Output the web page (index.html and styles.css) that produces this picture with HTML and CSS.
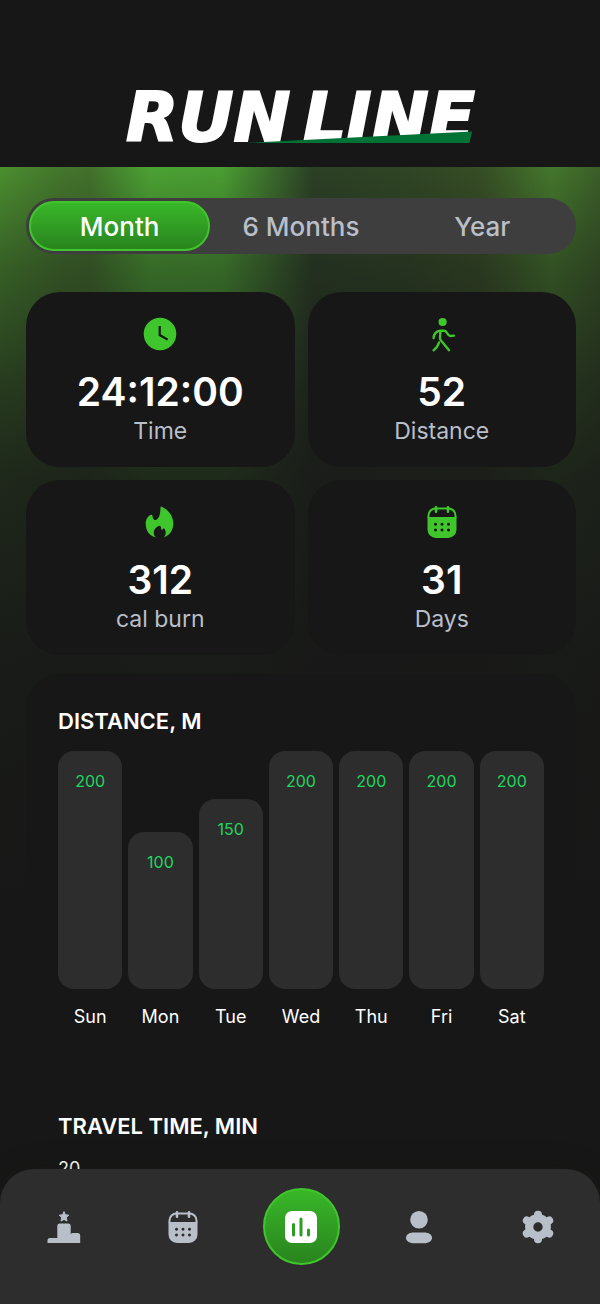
FILE: index.html
```html
<!DOCTYPE html>
<html lang="en">
<head>
    <meta charset="UTF-8">
    <meta name="viewport" content="width=device-width, initial-scale=1.0">
    <title>Run Line - Statistics</title>
    <link rel="stylesheet" href="styles.css">
</head>
<body>
    <svg class="sprite" aria-hidden="true">
        <symbol id="icon-calendar" viewBox="0 0 36 36">
            <path fill="none" stroke="currentColor" stroke-width="2" d="M4.500 14v-2.500a7 7 0 0 1 7-7h13a7 7 0 0 1 7 7V14"/>
            <path fill="none" stroke="currentColor" stroke-width="2.600" stroke-linecap="round" d="M12 3.200v4.600M24 3.200v4.600"/>
            <path fill="currentColor" fill-rule="evenodd" d="M3.500 13h29v12.500a8.500 8.500 0 0 1-8.500 8.500H12a8.500 8.500 0 0 1-8.500-8.500zM11.500 18.700a1.500 1.500 0 1 0 .01 0zm6.500 0a1.500 1.500 0 1 0 .01 0zm6.500 0a1.500 1.500 0 1 0 .01 0zM11.500 24.500a1.500 1.500 0 1 0 .01 0zm6.500 0a1.500 1.500 0 1 0 .01 0zm6.500 0a1.500 1.500 0 1 0 .01 0z"/>
        </symbol>
    </svg>

    <div class="screen">
        <header class="header">
            <svg class="logo" viewBox="0 0 360 60" role="img" aria-label="Run Line">
                <text x="6" y="55">RUN</text>
                <text x="183" y="55">LINE</text>
                <path class="logo-stripe" d="M124 57L352 45.500L349.500 57z"/>
            </svg>
        </header>

        <main class="content">
            <div class="tabs">
                <button class="tab active" type="button">Month</button>
                <button class="tab" type="button">6 Months</button>
                <button class="tab" type="button">Year</button>
            </div>

            <section class="stats">
                <div class="stat">
                    <svg class="stat-icon" viewBox="0 0 36 36">
                        <circle cx="18" cy="18" r="16.300" fill="currentColor"/>
                        <path fill="none" stroke="#171717" stroke-width="2.200" d="M17.700 10v9l8 4.600"/>
                    </svg>
                    <strong>24:12:00</strong>
                    <span>Time</span>
                </div>
                <div class="stat">
                    <svg class="stat-icon" viewBox="0 0 36 36">
                        <circle cx="18.600" cy="6" r="4.100" fill="currentColor"/>
                        <path fill="none" stroke="currentColor" stroke-width="2.400" stroke-linecap="round" stroke-linejoin="round" d="M9.600 22c0-4 3-7.300 6.500-7.300h4.200c3 0 3 5.300 6 5.300l3.600-.4M16.400 15l-.4 7.300c0 1 .6 1.700 1.200 2.500L25 34.200M15 26.500c-.9 3-2.300 5.600-5.400 7.700"/>
                    </svg>
                    <strong>52</strong>
                    <span>Distance</span>
                </div>
                <div class="stat">
                    <svg class="stat-icon" viewBox="0 0 36 36">
                        <path fill="currentColor" d="M18.500 3.400c0-.7.600-1 1.200-.7 6.800 3 11.600 9.600 11.600 16.600 0 7-3.700 12.300-9.500 14.100 1.200-1.200 1.900-2.800 1.900-4.900 0-1.800-.8-3.600-2.100-4.500-.3.900-.8 1.700-1.600 1.800-1-.1-.8-1.200-1-2.300-.1-1.200-.9-2.200-2.400-1.600-3 1.200-4.900 4-4.900 6.600 0 2 .8 3.700 2.200 4.900-6-.9-10.200-6.500-10.200-13.600 0-4.300 2.200-8.200 5.400-9.100.9-.2 1.300.3 1.400 1.200.3 2.400 1 4.100 2.800 4.100 3.200 0 5.200-5.200 5.200-12.600z"/>
                    </svg>
                    <strong>312</strong>
                    <span>cal burn</span>
                </div>
                <div class="stat">
                    <svg class="stat-icon"><use href="#icon-calendar"/></svg>
                    <strong>31</strong>
                    <span>Days</span>
                </div>
            </section>

            <section class="charts">
                <h2>DISTANCE, M</h2>
                <div class="bars">
                    <div class="bar" style="height: 100%">200</div>
                    <div class="bar" style="height: 66%">100</div>
                    <div class="bar" style="height: 80%">150</div>
                    <div class="bar" style="height: 100%">200</div>
                    <div class="bar" style="height: 100%">200</div>
                    <div class="bar" style="height: 100%">200</div>
                    <div class="bar" style="height: 100%">200</div>
                </div>
                <div class="days">
                    <span>Sun</span>
                    <span>Mon</span>
                    <span>Tue</span>
                    <span>Wed</span>
                    <span>Thu</span>
                    <span>Fri</span>
                    <span>Sat</span>
                </div>

                <h2>TRAVEL TIME, MIN</h2>
                <div class="scale">20</div>
            </section>
        </main>
    </div>

    <nav class="navbar">
        <a href="#" aria-label="Achievements">
            <svg class="nav-icon" viewBox="0 0 36 36" fill="currentColor">
                <path stroke="currentColor" stroke-linejoin="round" d="M18 2.600l1.400 3.200 3.400.4-2.500 2.400.7 3.500-3-1.700-3 1.700.7-3.500-2.500-2.400 3.400-.4z"/>
                <path d="M1.500 34v-2.500q0-2.500 2.500-2.500h7.300V17q0-2.500 2.500-2.500h8.400q2.500 0 2.500 2.500v8q.8-1 2.500-1h4.300q2.700 0 2.700 2.700V34z"/>
            </svg>
        </a>
        <a href="#" aria-label="Calendar">
            <svg class="nav-icon"><use href="#icon-calendar"/></svg>
        </a>
        <a class="current" href="#" aria-label="Statistics">
            <svg class="nav-icon" viewBox="0 0 36 36">
                <rect x="2" y="2" width="32" height="32" rx="7" fill="#fff"/>
                <path fill="none" stroke="#2f9c22" stroke-width="3" stroke-linecap="round" d="M10.500 15.500v10.500M18 10v16M25.500 21v5"/>
            </svg>
        </a>
        <a href="#" aria-label="Profile">
            <svg class="nav-icon" viewBox="0 0 36 36" fill="currentColor">
                <circle cx="18" cy="10.700" r="8.800"/>
                <path d="M13 23.500h10c5 0 8 2.200 8 5.300s-3 5.500-8 5.500H13c-5 0-8-2.400-8-5.500s3-5.300 8-5.300z"/>
            </svg>
        </a>
        <a href="#" aria-label="Settings">
            <svg class="nav-icon" viewBox="0 0 36 36">
                <circle cx="18" cy="18" r="8.800" fill="none" stroke="currentColor" stroke-width="8.200"/>
                <path fill="none" stroke="currentColor" stroke-width="8" stroke-linecap="round" d="M18 5.700v3M18 27.300v3M6.800 11.500l2.600 1.500M26.600 23l2.600 1.500M6.800 24.500l2.600-1.500M26.600 13l2.600-1.500"/>
            </svg>
        </a>
    </nav>
</body>
</html>
```
FILE: styles.css
```css
* {
    box-sizing: border-box;
}

body {
    font-family: Inter, "Liberation Sans", sans-serif;
    background-color: #171717;
    color: #fff;
    margin: 0;
}

.sprite {
    position: absolute;
    width: 0;
    height: 0;
}

.screen {
    height: 100vh;
    overflow-y: auto;
    scrollbar-width: none;
}

.header {
    display: flex;
    justify-content: center;
    padding: 86px 0 21px;
    background-color: #171717;
}

.logo {
    width: 360px;
    height: 60px;
    overflow: visible;
}

.logo text {
    font-family: "DejaVu Sans", Verdana, sans-serif;
    font-size: 68px;
    font-weight: 700;
    font-style: italic;
    fill: #fff;
    stroke: #fff;
    stroke-width: 2px;
}

.logo-stripe {
    fill: #007236;
}

.content {
    padding: 31px 24px 150px 26px;
    background:
        linear-gradient(to bottom, rgba(23, 23, 23, 0) 0, rgba(23, 23, 23, 0.4) 100px, rgba(23, 23, 23, 0.7) 220px, rgba(23, 23, 23, 0.86) 310px, rgba(23, 23, 23, 0.96) 490px, #171717 740px),
        linear-gradient(to right, #4b8f2f 0, #44762c 10%, #42712b 15%, #4ba233 25%, #4a9e32 37%, #3b6c2c 45%, #2b4025 52%, #2f4524 68%, #364d25 80%, #44772c 92%, #3b5e28 100%);
}

.tabs {
    display: flex;
    height: 56px;
    padding: 3px;
    border-radius: 28px;
    background-color: #3e3e3e;
}

.tab {
    flex: 1;
    padding: 0;
    border: 2px solid transparent;
    border-radius: 25px;
    background: none;
    color: #b9bfc9;
    font-family: inherit;
    font-size: 26px;
    font-weight: 500;
    cursor: pointer;
}

.tab.active {
    border-color: #40c62d;
    background: linear-gradient(#39b729, #29841e);
    color: #fff;
}

.stats {
    display: grid;
    grid-template-columns: 1fr 1fr;
    gap: 13px;
    margin-top: 38px;
}

.stat {
    display: flex;
    flex-direction: column;
    align-items: center;
    height: 175px;
    padding-top: 24px;
    border-radius: 34px;
    background-color: #171717;
}

.stat-icon {
    width: 36px;
    height: 36px;
    color: #40c62d;
}

.stat strong {
    margin-top: 16px;
    font-size: 39px;
    font-weight: 600;
    line-height: 48px;
}

.stat span {
    color: #b9bfc9;
    font-size: 23px;
    font-weight: 400;
    line-height: 30px;
}

.charts {
    margin-top: 19px;
    padding: 32px;
    border-radius: 34px;
    background-color: #171717;
}

.charts h2 {
    margin: 0;
    font-size: 22px;
    font-weight: 600;
    line-height: 30px;
}

.bars {
    display: flex;
    align-items: flex-end;
    gap: 6px;
    height: 238px;
    margin-top: 15px;
}

.bar {
    flex: 1;
    padding-top: 20px;
    border-radius: 16px;
    background-color: #2d2d2d;
    color: #1ed760;
    font-size: 16px;
    line-height: 20px;
    text-align: center;
}

.days {
    display: flex;
    gap: 6px;
    margin: 16px 0 82px;
    font-size: 18px;
    line-height: 24px;
}

.days span {
    flex: 1;
    text-align: center;
}

.scale {
    margin-top: 16px;
    font-size: 18px;
    line-height: 24px;
}

.navbar {
    position: fixed;
    left: 0;
    right: 0;
    bottom: 0;
    display: flex;
    height: 135px;
    padding: 19px 3px 0 5px;
    border-radius: 34px 34px 0 0;
    background-color: #2d2d2d;
    box-shadow: 0 -4px 24px rgba(30, 24, 18, 0.2);
}

.navbar a {
    display: flex;
    flex: 1;
    align-items: center;
    justify-content: center;
    height: 77px;
    color: #b9bfc9;
}

.nav-icon {
    width: 36px;
    height: 36px;
}

.navbar .current {
    flex: none;
    width: 77px;
    margin: 0 20px;
    border: 2px solid #40c62d;
    border-radius: 50%;
    background: linear-gradient(#39b729, #29841e);
}
```
